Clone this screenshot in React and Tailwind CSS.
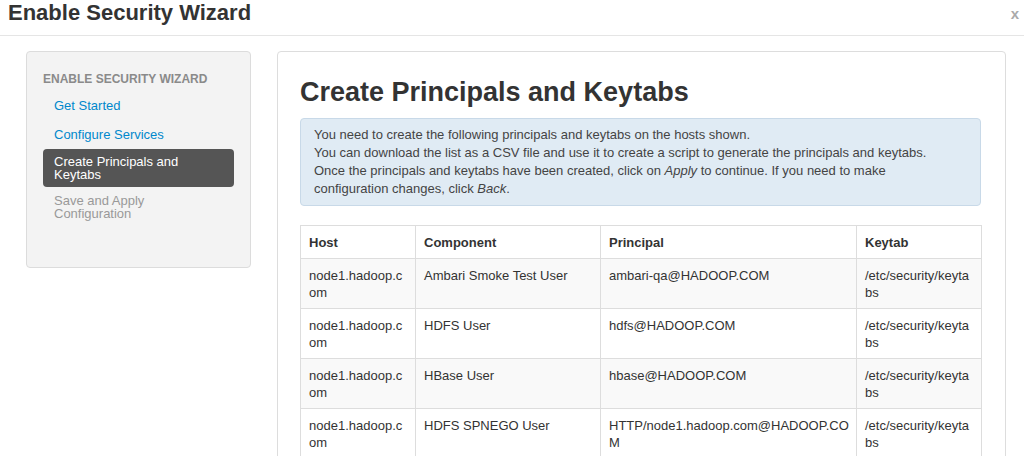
import React from 'react';

const steps = [
  { label: 'Get Started', state: 'done' },
  { label: 'Configure Services', state: 'done' },
  { label: ['Create Principals and', 'Keytabs'], state: 'active' },
  { label: ['Save and Apply', 'Configuration'], state: 'todo' },
];

const rows = [
  { host: ['node1.hadoop.c', 'om'], component: 'Ambari Smoke Test User', principal: ['ambari-qa@HADOOP.COM'], keytab: ['/etc/security/keyta', 'bs'] },
  { host: ['node1.hadoop.c', 'om'], component: 'HDFS User', principal: ['hdfs@HADOOP.COM'], keytab: ['/etc/security/keyta', 'bs'] },
  { host: ['node1.hadoop.c', 'om'], component: 'HBase User', principal: ['hbase@HADOOP.COM'], keytab: ['/etc/security/keyta', 'bs'] },
  { host: ['node1.hadoop.c', 'om'], component: 'HDFS SPNEGO User', principal: ['HTTP/node1.hadoop.com@HADOOP.CO', 'M'], keytab: ['/etc/security/keyta', 'bs'] },
];

const Lines = ({ parts }) => (
  <>
    {parts.map((p, i) => (
      <span key={i} className="block">{p}</span>
    ))}
  </>
);

const Sidebar = () => (
  <div className="w-[225px] h-[217px] shrink-0 bg-[#f3f3f3] border border-[#dcdcdc] rounded-[4px] pt-[21px] px-[16px]">
    <div className="text-[12px] leading-[13px] font-bold uppercase text-[#8a8a8a] mb-[5px]">Enable Security Wizard</div>
    <ul>
      {steps.map((s, i) => {
        if (s.state === 'active') {
          return (
            <li key={i} className="bg-[#555555] text-white text-[13px] leading-[13px] py-[6px] pl-[11px] rounded-[4px] mb-[2px]">
              <Lines parts={s.label} />
            </li>
          );
        }
        if (s.state === 'todo') {
          return (
            <li key={i} className="text-[#999999] text-[13px] leading-[13px] py-[5px] pl-[11px]">
              <Lines parts={s.label} />
            </li>
          );
        }
        return (
          <li key={i} className="text-[#0088cc] text-[13px] leading-[15px] py-[7px] pl-[11px]">
            {s.label}
          </li>
        );
      })}
    </ul>
  </div>
);

const Cell = ({ children, head }) => (
  <td className={`border border-[#dddddd] px-[8px] pt-[8px] pb-[7px] align-top leading-[17px] ${head ? 'font-bold' : ''}`}>
    {children}
  </td>
);

const App = () => {
  return (
    <div className="w-[1024px] h-[456px] overflow-hidden bg-white text-[#333333]" style={{ fontFamily: '"Liberation Sans", Arial, sans-serif' }}>
      {/* Modal header */}
      <div className="h-[36px] border-b border-[#e5e5e5] flex items-start justify-between pl-[8px] pr-[5px]">
        <h3 className="text-[22px] leading-[26px] font-bold text-[#333333]">Enable Security Wizard</h3>
        <span className="text-[15px] font-bold text-[#aaaaaa] pt-[3px]">x</span>
      </div>

      {/* Body */}
      <div className="flex gap-[26px] pt-[15px] pl-[26px]">
        <Sidebar />

        <div className="w-[729px] h-[420px] shrink-0 border border-[#dddddd] rounded-[4px] px-[22px] pt-[25px]">
          <h2 className="text-[27px] leading-[31px] font-bold text-[#333333] mb-[10px]">Create Principals and Keytabs</h2>

          <div className="w-[681px] bg-[#e0ebf4] border border-[#c8d9e8] rounded-[4px] pl-[13px] py-[7px] text-[13px] leading-[18px] text-[#444444]">
            <p>You need to create the following principals and keytabs on the hosts shown.</p>
            <p>You can download the list as a CSV file and use it to create a script to generate the principals and keytabs.</p>
            <p>Once the principals and keytabs have been created, click on <i>Apply</i> to continue. If you need to make</p>
            <p>configuration changes, click <i>Back</i>.</p>
          </div>

          <table className="mt-[19px] w-[681px] table-fixed border-collapse text-[13px] text-[#333333]">
            <colgroup>
              <col className="w-[115px]" />
              <col className="w-[185px]" />
              <col className="w-[256px]" />
              <col className="w-[125px]" />
            </colgroup>
            <thead>
              <tr>
                <Cell head>Host</Cell>
                <Cell head>Component</Cell>
                <Cell head>Principal</Cell>
                <Cell head>Keytab</Cell>
              </tr>
            </thead>
            <tbody>
              {rows.map((r, i) => (
                <tr key={i} className={i % 2 === 0 ? 'bg-[#f9f9f9]' : 'bg-white'}>
                  <Cell><Lines parts={r.host} /></Cell>
                  <Cell>{r.component}</Cell>
                  <Cell><Lines parts={r.principal} /></Cell>
                  <Cell><Lines parts={r.keytab} /></Cell>
                </tr>
              ))}
            </tbody>
          </table>
        </div>
      </div>
    </div>
  );
};

export default App;
